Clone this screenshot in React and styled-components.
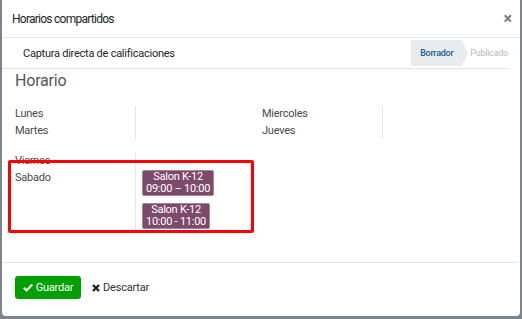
import React from 'react'
import styled, { createGlobalStyle } from 'styled-components'

const GlobalStyle = createGlobalStyle`
    html, body {
        margin: 0;
        padding: 0;
        background: #7d848c;
        font-family: Roboto, "Liberation Sans", sans-serif;
    }
`

const Modal = styled.div`
    margin-left: 2px;
    width: 518px;
    height: 316px;
    background: #fff;
    border-radius: 0 0 4px 4px;
    display: flex;
    flex-direction: column;
    overflow: hidden;
`

const Header = styled.div`
    height: 38px;
    box-sizing: border-box;
    padding: 0 8px 0 10px;
    display: flex;
    align-items: center;
    justify-content: space-between;
    border-bottom: 1px solid #e9ecef;
    h4{
        margin: 0;
        font-size: 12px;
        letter-spacing: -0.75px;
        font-weight: 400;
        color: #212529;
    }
    span{
        font-size: 16px;
        font-weight: 700;
        color: #7a7a7a;
        line-height: 1;
    }
`

const Body = styled.div`
    flex: 1;
    position: relative;
`

const StatusBar = styled.div`
    height: 31px;
    margin-right: 12px;
    box-sizing: border-box;
    border-bottom: 1px solid #dee2e6;
    display: flex;
    align-items: center;
    justify-content: space-between;
    padding-left: 21px;
    font-size: 11px;
    letter-spacing: -0.25px;
    color: #212529;
`

const Steps = styled.div`
    display: flex;
    align-items: center;
    height: 26px;
`

const Step = styled.div`
    position: relative;
    height: 26px;
    display: flex;
    align-items: center;
    font-size: 9px;
    padding: ${p => p.$active ? '0 9px 0 9px' : '0 0 0 8px'};
    background: ${p => p.$active ? '#e9ecef' : 'transparent'};
    color: ${p => p.$active ? '#1f5c8e' : '#b4b9c0'};
    font-weight: ${p => p.$active ? 500 : 400};
    ${p => p.$active && `
        &::after{
            content: '';
            position: absolute;
            right: -6px;
            top: 0;
            border-left: 6px solid #e9ecef;
            border-top: 13px solid transparent;
            border-bottom: 13px solid transparent;
        }
    `}
`

const Sheet = styled.div`
    padding-left: 13px;
`

const Title = styled.h2`
    margin: 1px 0 0;
    font-size: 16px;
    letter-spacing: -0.2px;
    line-height: 22px;
    font-weight: 400;
    color: #555;
`

const WeekTop = styled.div`
    margin-top: 14px;
    display: grid;
    grid-template-columns: 120px 127px 120px 1fr;
    font-size: 11px;
    letter-spacing: -0.25px;
    line-height: 16.5px;
    color: #4a4a4a;
`

const Field = styled.div`
    border-left: 1px solid #e4e7ea;
    min-height: 32px;
    padding-left: 7px;
`

const WeekBottom = styled.div`
    position: relative;
    margin-top: 14px;
    display: grid;
    grid-template-columns: 120px 1fr;
    font-size: 11px;
    letter-spacing: -0.25px;
    line-height: 16.5px;
    color: #4a4a4a;
`

const SlotList = styled.div`
    border-left: 1px solid #e4e7ea;
    padding: 17px 0 2px 6px;
    display: flex;
    flex-direction: column;
    align-items: flex-start;
    gap: 7px;
`

const Slot = styled.div`
    background: #7c4a6b;
    border: 1px solid #a4849a;
    border-radius: 2px;
    color: #fff;
    font-size: 11px;
    line-height: 12px;
    text-align: center;
    padding: 0 3px;
`

const Highlight = styled.div`
    position: absolute;
    left: -7px;
    top: 7px;
    width: 246px;
    height: 73px;
    box-sizing: border-box;
    border: 3px solid #ff0000;
    border-radius: 2px;
    pointer-events: none;
`

const Footer = styled.div`
    border-top: 1px solid #e4e7ea;
    height: 54px;
    box-sizing: border-box;
    padding: 13px 0 0 13px;
    display: flex;
    align-items: flex-start;
    gap: 11px;
    margin-right: 2px;
`

const SaveButton = styled.button`
    height: 23px;
    width: 66px;
    border: none;
    border-radius: 3px;
    background: #00a000;
    color: #fff;
    font-family: inherit;
    font-size: 11px;
    letter-spacing: -0.2px;
    display: flex;
    align-items: center;
    justify-content: center;
    gap: 3px;
    padding: 0;
`

const DiscardButton = styled.button`
    height: 23px;
    border: none;
    background: none;
    color: #333;
    font-family: inherit;
    font-size: 11px;
    letter-spacing: -0.2px;
    display: flex;
    align-items: center;
    gap: 3px;
    padding: 0;
`

const CheckIcon = () => (
    <svg width="10" height="9" viewBox="0 0 10 9">
        <path d="M0.8 4.8 L3.6 7.4 L9.2 1.4" fill="none" stroke="#fff" strokeWidth="2.2" />
    </svg>
)

const CrossIcon = () => (
    <svg width="8" height="8" viewBox="0 0 8 8">
        <path d="M1 1 L7 7 M7 1 L1 7" stroke="#222" strokeWidth="2.4" />
    </svg>
)

const App = () => {
    return (
        <>
            <GlobalStyle />
            <Modal>
                <Header>
                    <h4>Horarios compartidos</h4>
                    <span>×</span>
                </Header>
                <Body>
                    <StatusBar>
                        <div>Captura directa de calificaciones</div>
                        <Steps>
                            <Step $active>Borrador</Step>
                            <Step>Publicado</Step>
                        </Steps>
                    </StatusBar>
                    <Sheet>
                        <Title>Horario</Title>
                        <WeekTop>
                            <div>Lunes<br />Martes</div>
                            <Field />
                            <div>Miercoles<br />Jueves</div>
                            <Field />
                        </WeekTop>
                        <WeekBottom>
                            <div>Viernes<br />Sabado</div>
                            <SlotList>
                                <Slot>Salon K-12<br />09:00 – 10:00</Slot>
                                <Slot>Salon K-12<br />10:00 - 11:00</Slot>
                            </SlotList>
                            <Highlight />
                        </WeekBottom>
                    </Sheet>
                </Body>
                <Footer>
                    <SaveButton><CheckIcon />Guardar</SaveButton>
                    <DiscardButton><CrossIcon />Descartar</DiscardButton>
                </Footer>
            </Modal>
        </>
    )
}

export default App
